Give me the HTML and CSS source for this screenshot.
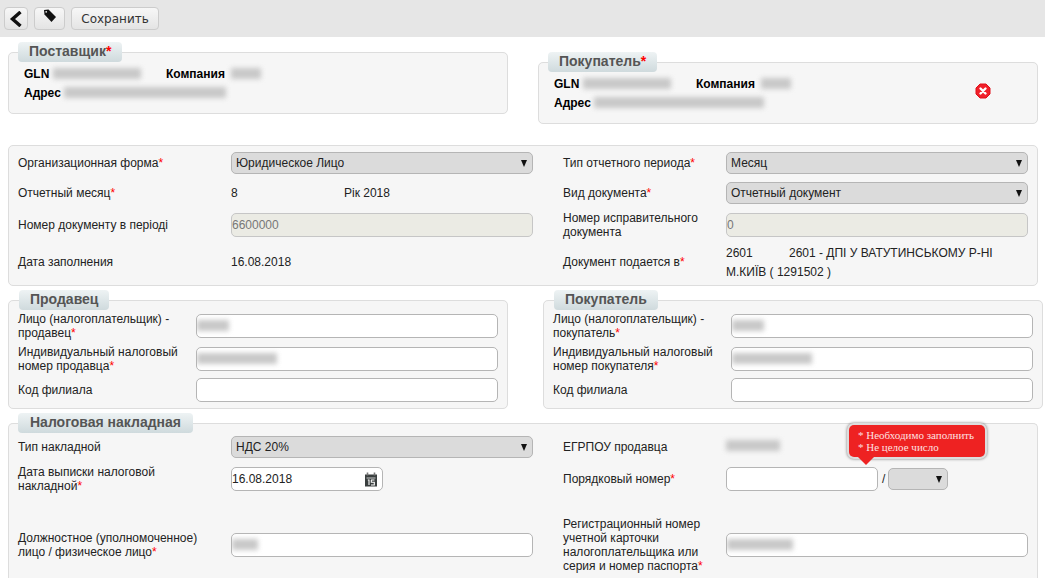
FILE: index.html
```html
<!DOCTYPE html>
<html lang="en">
<head>
    <meta charset="UTF-8">
    <meta content="width=device-width, initial-scale=1.0" name="viewport">
    <title>Налоговая накладная</title>
    <link rel="stylesheet" href="styles.css">
</head>
<body>
<div class="toolbar">
    <button class="tool-btn back-btn" type="button" aria-label="Назад">
        <svg width="14" height="16" viewBox="0 0 14 16"><path d="M11.500 1 L3.500 8 L11.500 15" fill="none" stroke="#111" stroke-width="3.400"/></svg>
    </button>
    <button class="tool-btn tag-btn" type="button" aria-label="Тег">
        <svg width="14" height="14" viewBox="0 0 14 14"><path d="M1 1 L5.500 0.500 L13 8 L8.500 13 L1.500 5.500 Z" fill="#111"/><circle cx="3.200" cy="2.800" r="0.900" fill="#eee"/></svg>
    </button>
    <button class="tool-btn save-btn" type="button">Сохранить</button>
</div>

<div class="parties">
    <fieldset class="panel party party-seller">
        <legend>Поставщик<span class="req">*</span></legend>
        <div class="party-row">
            <b class="gln">GLN</b><span class="blur blur-gln"></span>
            <b class="company">Компания</b><span class="blur blur-company"></span>
        </div>
        <div class="party-row">
            <b>Адрес</b><span class="blur blur-address"></span>
        </div>
    </fieldset>
    <fieldset class="panel party party-buyer">
        <legend>Покупатель<span class="req">*</span></legend>
        <div class="party-row">
            <b class="gln">GLN</b><span class="blur blur-gln"></span>
            <b class="company">Компания</b><span class="blur blur-company"></span>
        </div>
        <div class="party-row">
            <b>Адрес</b><span class="blur blur-address-long"></span>
        </div>
        <svg class="remove-icon" width="16" height="16" viewBox="0 0 16 16">
            <path d="M5 1 H11 L15 5 V11 L11 15 H5 L1 11 V5 Z" fill="#f0202a" stroke="#e0101a" stroke-width="1" stroke-linejoin="round"/>
            <path d="M5.500 5.500 L10.500 10.500 M10.500 5.500 L5.500 10.500" stroke="#fff" stroke-width="2.400" stroke-linecap="round"/>
        </svg>
    </fieldset>
</div>

<div class="panel main-panel">
    <div class="form-grid">
        <div class="field field-h34">
            <label>Организационная форма<span class="req">*</span></label>
            <div class="select">Юридическое Лицо</div>
        </div>
        <div class="field field-h34">
            <label>Тип отчетного периода<span class="req">*</span></label>
            <div class="select">Месяц</div>
        </div>
        <div class="field field-h25">
            <label>Отчетный месяц<span class="req">*</span></label>
            <div class="period"><span class="month">8</span><span>Рік 2018</span></div>
        </div>
        <div class="field field-h25">
            <label>Вид документа<span class="req">*</span></label>
            <div class="select select-low">Отчетный документ</div>
        </div>
        <div class="field field-h40">
            <label>Номер документу в періоді</label>
            <div class="input disabled">6600000</div>
        </div>
        <div class="field field-h40">
            <label>Номер исправительного<br>документа</label>
            <div class="input disabled">0</div>
        </div>
        <div class="field field-h33">
            <label>Дата заполнения</label>
            <div>16.08.2018</div>
        </div>
        <div class="field field-h33">
            <label>Документ подается в<span class="req">*</span></label>
            <div class="dpi">
                <div class="dpi-line"><span class="dpi-code">2601</span><span>2601 - ДПІ У ВАТУТИНСЬКОМУ Р-НІ</span></div>
                <div class="dpi-line">М.КИЇВ ( 1291502 )</div>
            </div>
        </div>
    </div>
</div>

<div class="sides">
    <fieldset class="panel side side-left">
        <legend>Продавец</legend>
        <div class="side-grid">
            <label>Лицо (налогоплательщик) -<br>продавец<span class="req">*</span></label>
            <div class="input"><span class="blur blur-i1"></span></div>
            <label>Индивидуальный налоговый<br>номер продавца<span class="req">*</span></label>
            <div class="input"><span class="blur blur-i2"></span></div>
            <label>Код филиала</label>
            <div class="input"></div>
        </div>
    </fieldset>
    <fieldset class="panel side side-right">
        <legend>Покупатель</legend>
        <div class="side-grid">
            <label>Лицо (налогоплательщик) -<br>покупатель<span class="req">*</span></label>
            <div class="input"><span class="blur blur-i1"></span></div>
            <label>Индивидуальный налоговый<br>номер покупателя<span class="req">*</span></label>
            <div class="input"><span class="blur blur-i2"></span></div>
            <label>Код филиала</label>
            <div class="input"></div>
        </div>
    </fieldset>
</div>

<fieldset class="panel invoice">
    <legend>Налоговая накладная</legend>
    <div class="form-grid">
        <div class="field field-inv1">
            <label>Тип накладной</label>
            <div class="select">НДС 20%</div>
        </div>
        <div class="field field-inv1">
            <label>ЕГРПОУ продавца</label>
            <div><span class="blur blur-edrpou"></span></div>
        </div>
        <div class="field field-inv2">
            <label>Дата выписки налоговой<br>накладной<span class="req">*</span></label>
            <div class="input date-input">16.08.2018
                <svg class="cal-icon" width="14" height="15" viewBox="0 0 14 15">
                    <path d="M1 2.500 H13 V14.500 H1 Z" fill="#3a3f3f"/>
                    <rect x="2.500" y="5.500" width="9" height="1" fill="#c9cccc"/>
                    <path d="M3.500 0.500 V3.500 M10.500 0.500 V3.500" stroke="#777" stroke-width="1.600"/>
                    <path d="M3.800 8 H5 V13 M7 8 H10.500 M7.300 8 V10.300 H10.300 V13 H7" fill="none" stroke="#fff" stroke-width="1.100"/>
                </svg>
            </div>
        </div>
        <div class="field field-inv2">
            <label>Порядковый номер<span class="req">*</span></label>
            <div class="number-row">
                <div class="input number-input"></div>
                <span>/</span>
                <div class="select select-small"></div>
                <div class="tip">
                    <div>* Необходимо заполнить</div>
                    <div>* Не целое число</div>
                </div>
            </div>
        </div>
        <div class="field field-inv3">
            <label>Должностное (уполномоченное)<br>лицо / физическое лицо<span class="req">*</span></label>
            <div class="input"><span class="blur blur-i3"></span></div>
        </div>
        <div class="field field-inv3">
            <label>Регистрационный номер<br>учетной карточки<br>налогоплательщика или<br>серия и номер паспорта<span class="req">*</span></label>
            <div class="input"><span class="blur blur-i4"></span></div>
        </div>
    </div>
</fieldset>
</body>
</html>
```
FILE: styles.css
```css
html, body {
    height: 578px;
    overflow: hidden;
}

body {
    margin: 0;
    background-color: #fff;
    font-family: "Liberation Sans", Arial, sans-serif;
    font-size: 12px;
    line-height: 14px;
    color: #222;
}

.toolbar {
    display: flex;
    gap: 6px;
    height: 37px;
    padding: 7px 0 0 4px;
    box-sizing: border-box;
    background-color: #e6e6e6;
}

.tool-btn {
    height: 23px;
    padding: 0;
    display: flex;
    align-items: center;
    justify-content: center;
    border: 1px solid #ccc;
    border-radius: 4px;
    background: linear-gradient(#f7f7f7, #e4e4e4);
}

.back-btn { width: 24px; }
.tag-btn { width: 31px; padding-bottom: 5px; }
.save-btn {
    width: 88px;
    font-family: "DejaVu Sans", sans-serif;
    font-size: 12px;
    color: #333;
}

.panel {
    margin: 0;
    padding: 0;
    min-width: 0;
    box-sizing: border-box;
    background-color: #f6f6f6;
    border: 1px solid #ddd;
    border-radius: 5px;
}

legend {
    padding: 0 11px;
    margin-left: 9px;
    height: 20px;
    box-sizing: border-box;
    line-height: 19px;
    font-size: 14px;
    font-weight: bold;
    color: #555;
    border-radius: 4px;
    background: linear-gradient(#eef3f4, #cfdadd);
}

.req { color: #f00; font-weight: normal; }
legend .req { font-weight: bold; }

/* top row */
.parties {
    display: flex;
    align-items: flex-start;
    padding: 5px 0 0 8px;
}

.party { position: relative; width: 500px; height: 72px; color: #000; }
.party-buyer { margin: 10px 0 0 30px; }

.party-row {
    display: flex;
    align-items: center;
    height: 19px;
    padding-left: 15px;
}

.party legend + .party-row { margin-top: 2px; }

.gln { width: 0; white-space: nowrap; }
.company { margin-left: 25px; }

.blur {
    display: inline-block;
    height: 11px;
    background-color: #c8c8c8;
    filter: blur(2.500px);
}

.blur-gln { width: 88px; margin-left: 29px; }
.blur-company { width: 30px; margin-left: 6px; }
.blur-address { width: 162px; margin-left: 3px; }
.blur-address-long { width: 170px; margin-left: 3px; }
.blur-i1 { width: 32px; }
.blur-i2 { width: 80px; }
.blur-i3 { width: 26px; }
.blur-i4 { width: 66px; }
.blur-edrpou { width: 54px; }

.remove-icon { position: absolute; right: 46px; top: 11px; }

/* main block */
.main-panel {
    width: 1030px;
    height: 141px;
    margin: 21px 0 0 8px;
}

.form-grid {
    display: grid;
    grid-template-columns: 545px 475px;
    padding-left: 9px;
}

.field {
    display: grid;
    grid-template-columns: 213px 302px;
    align-items: center;
}

.field:nth-child(even) { grid-template-columns: 163px 302px; }

.field-h34 { height: 34px; }
.field-h25 { height: 25px; }
.field-h40 { height: 40px; }
.field-h33 { height: 33px; grid-template-rows: 33px; }

.select {
    height: 22px;
    padding-left: 4px;
    box-sizing: border-box;
    line-height: 20px;
    position: relative;
    color: #222;
    background-color: #dbdbdb;
    border: 1px solid #b5b5b5;
    border-radius: 5px;
}

.select-low { margin-top: 1px; }

.select::after {
    content: "";
    position: absolute;
    right: 5px;
    top: 7px;
    border-left: 3.500px solid transparent;
    border-right: 3.500px solid transparent;
    border-top: 7px solid #111;
}

.input {
    height: 24px;
    box-sizing: border-box;
    line-height: 22px;
    background-color: #fff;
    border: 1px solid #b5b5b5;
    border-radius: 5px;
    overflow: hidden;
}

.input .blur { vertical-align: middle; margin-top: -2px; }

.disabled {
    background-color: #ebebe4;
    color: #777;
    border-color: #c6c6c6;
}

.period { display: flex; }
.month { width: 113px; }
.dpi { line-height: 19px; margin-top: 3px; }
.dpi-line { display: flex; }
.dpi-code { width: 63px; }

/* seller and buyer */
.sides {
    display: flex;
    padding: 4px 0 0 8px;
    gap: 35px;
}

.side { width: 500px; height: 119px; }
.side legend { margin-left: 10px; }

.side-grid {
    display: grid;
    grid-template-columns: 178px 302px;
    grid-template-rows: 28px 38px 24px;
    align-items: center;
    padding: 2px 0 0 9px;
}

/* invoice */
.invoice {
    width: 1030px;
    height: 165px;
    margin: 4px 0 0 8px;
    border-bottom: none;
    border-radius: 5px 5px 0 0;
}

.invoice legend { padding: 0 12px; }

.field-inv1 { height: 28px; }
.field-inv2 { height: 36px; }
.field-inv3 { height: 81px; padding-top: 15px; box-sizing: border-box; }

.date-input { width: 152px; position: relative; }
.cal-icon { position: absolute; right: 4px; top: 4px; }

.number-row {
    position: relative;
    display: flex;
    align-items: center;
    gap: 4px;
}

.number-input { width: 152px; }
.select-small { width: 60px; margin-left: -1px; }

.tip {
    position: absolute;
    left: 123px;
    bottom: 34px;
    width: 136px;
    height: 32px;
    padding: 4px 0 0 9px;
    box-sizing: border-box;
    font-family: "Liberation Serif", serif;
    font-size: 11px;
    line-height: 12px;
    color: #fde0e0;
    background-color: #ee2222;
    border-radius: 5px;
    box-shadow: 0 0 0 2px #ddd, 0 0 3px 2px #777;
}

.tip::after {
    content: "";
    position: absolute;
    left: 9px;
    bottom: -8px;
    border-left: 8px solid transparent;
    border-right: 8px solid transparent;
    border-top: 8px solid #ee2222;
}
```
